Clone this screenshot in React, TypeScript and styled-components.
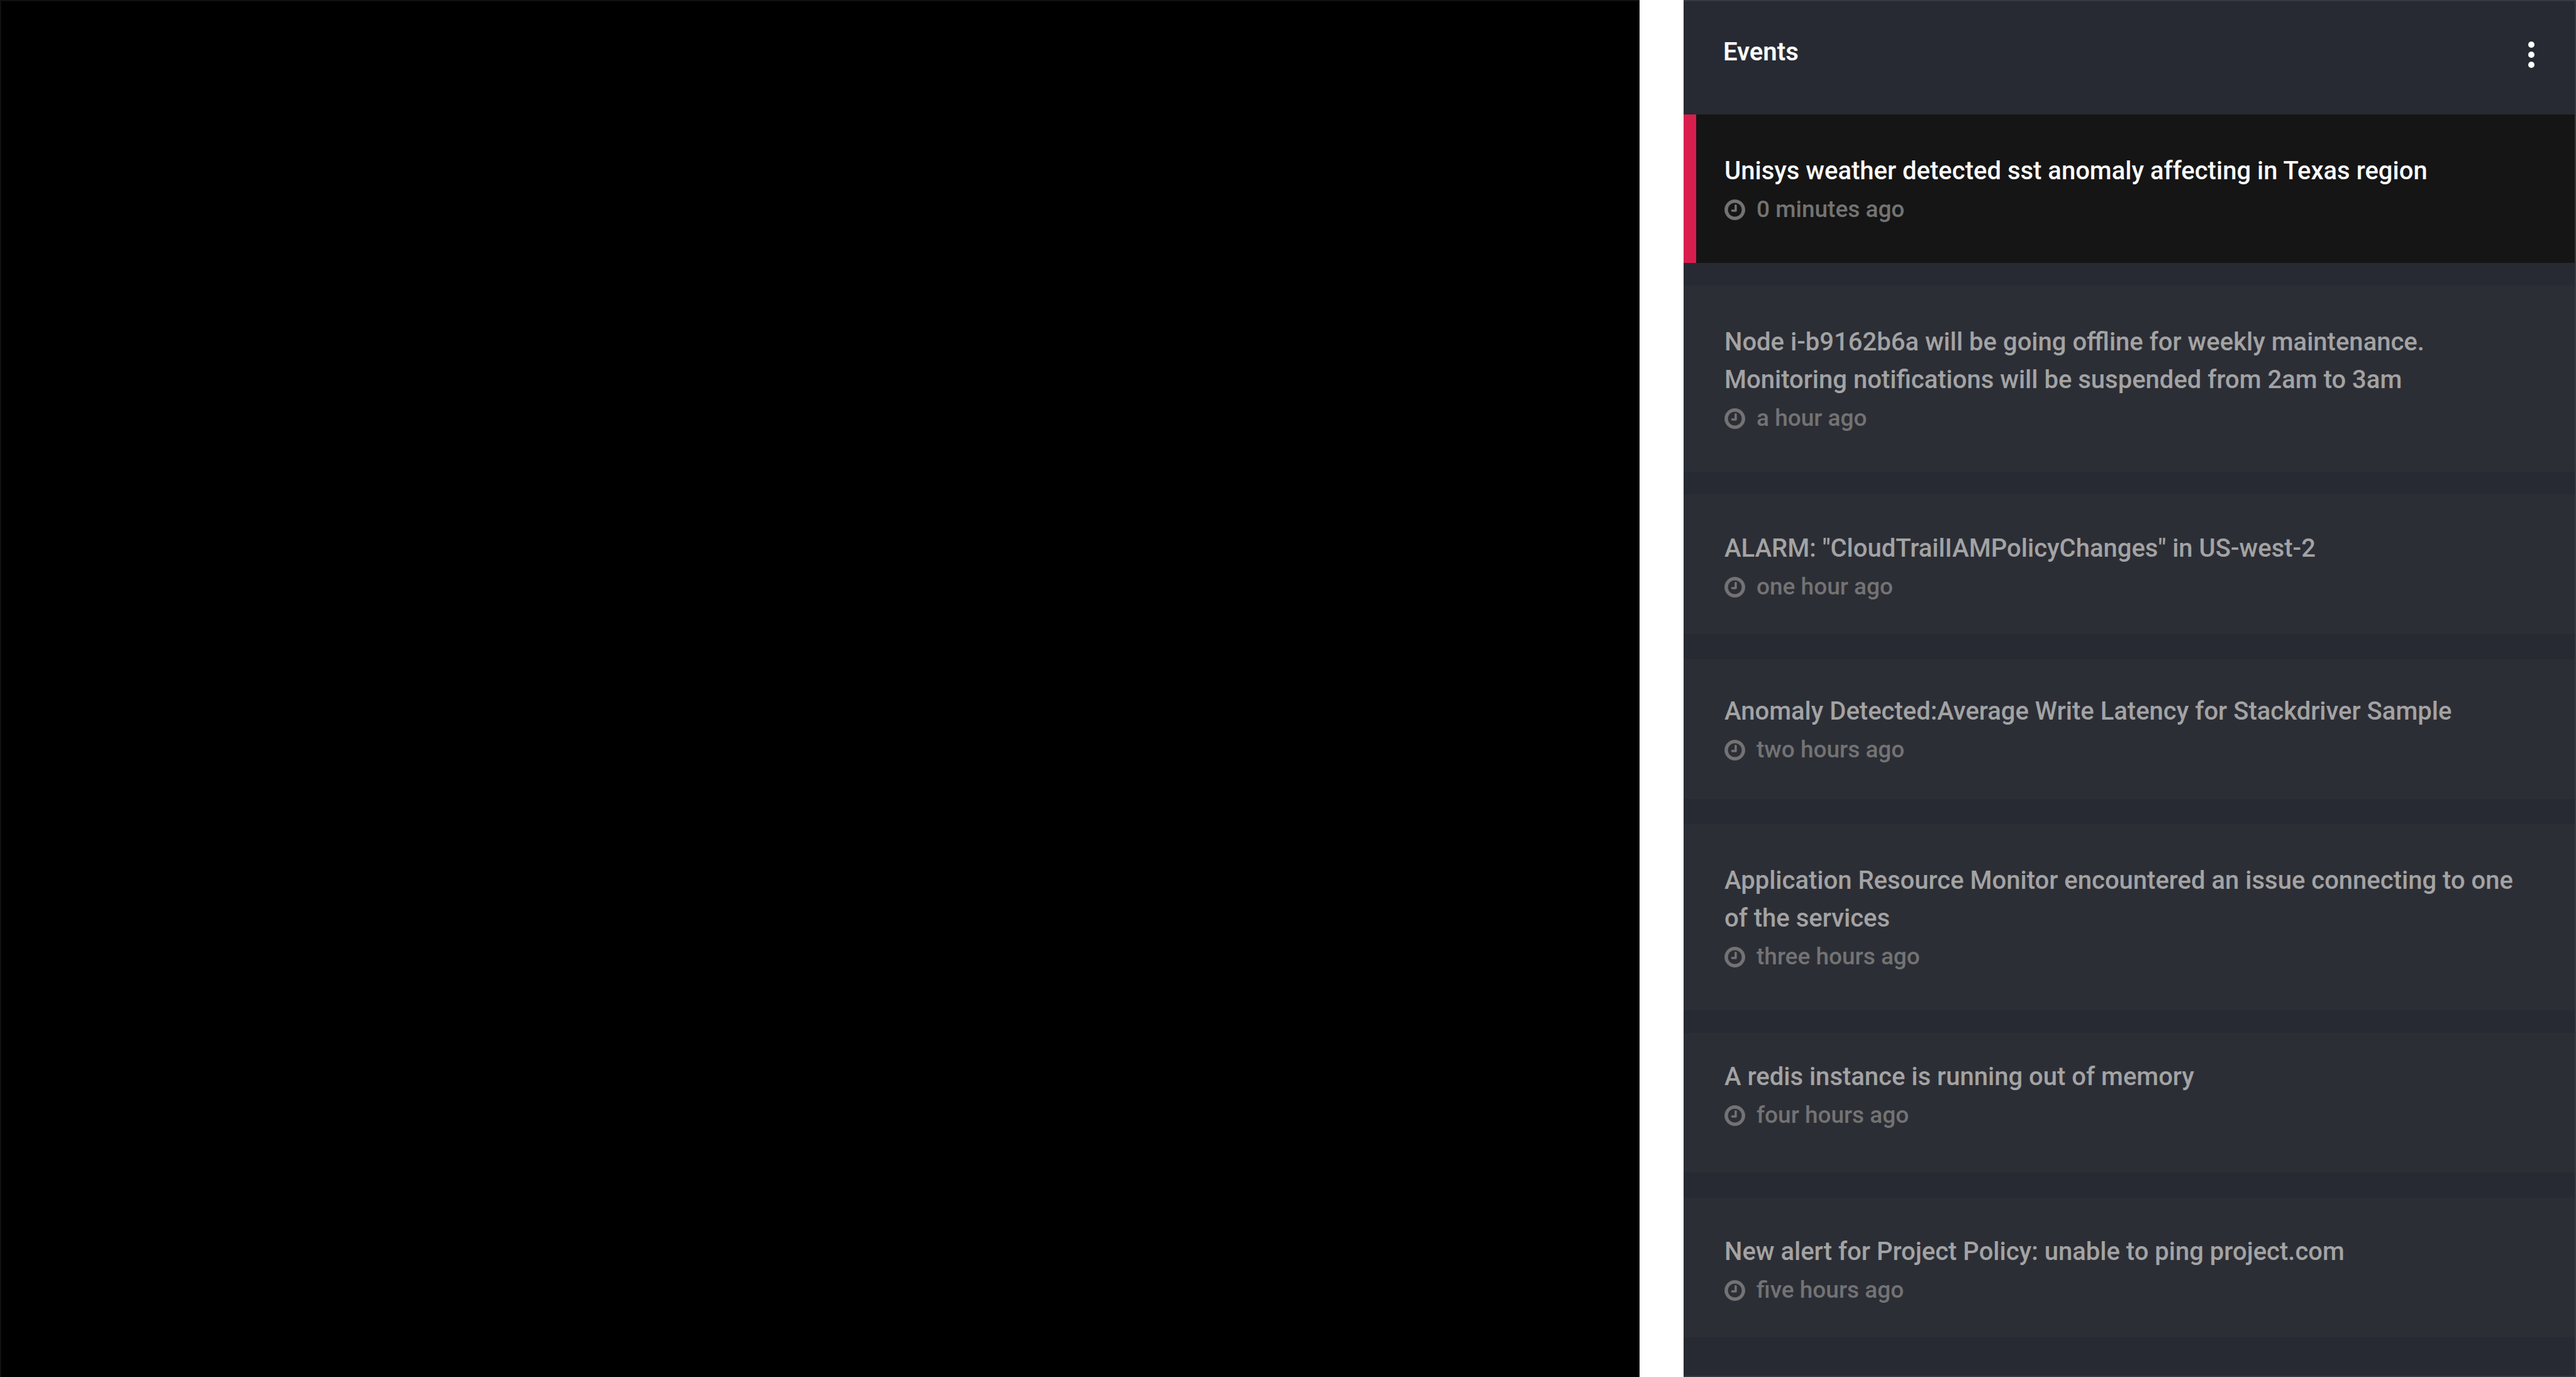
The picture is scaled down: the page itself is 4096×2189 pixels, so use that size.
import React from "react";
import styled, { createGlobalStyle } from "styled-components";

const GlobalStyle = createGlobalStyle`
  *, *::before, *::after { box-sizing: border-box; }
  body { margin: 0; background: #ffffff; font-family: Roboto, "Liberation Sans", sans-serif; }
`;

const Page = styled.div`
  display: grid;
  grid-template-columns: 2607fr 1419fr;
  column-gap: 70px;
  min-height: 100vh;
`;

const Stage = styled.main`
  background: #000000;
  border-top: 2px solid #111111;
  border-left: 2px solid #111111;
`;

const Panel = styled.aside`
  display: flex;
  flex-direction: column;
  background: #272a32;
  border: 0 solid #363942;
  border-width: 2px 2px 2px 0;
`;

const Header = styled.header`
  display: flex;
  align-items: flex-start;
  justify-content: space-between;
  height: 180px;
  padding: 51px 60px 0 63px;
`;

const Heading = styled.h1`
  margin: 0;
  color: #fafafa;
  font-size: 40px;
  font-weight: 600;
  line-height: 60px;
`;

const MenuButton = styled.button`
  display: flex;
  flex-direction: column;
  align-items: center;
  gap: 6px;
  margin: 0;
  padding: 13px 4px;
  border: 0;
  background: none;
  cursor: pointer;
`;

const Dot = styled.span`
  width: 10px;
  height: 10px;
  border-radius: 50%;
  background: #ffffff;
`;

const List = styled.ul`
  margin: 0;
  padding: 0;
  list-style: none;
`;

type Spacing = "roomy" | "low" | "compact" | "raised";

const paddings: Record<Spacing, string> = {
  roomy: "60px 64px 54px 45px",
  low: "56px 64px 44px 45px",
  compact: "53px 64px 47px 45px",
  raised: "40px 64px 60px 45px",
};

const Item = styled.li<{ $spacing: Spacing; $active: boolean }>`
  margin-bottom: ${(p) => (p.$spacing === "roomy" ? 36 : 40)}px;
  padding: ${(p) => paddings[p.$spacing]};
  border-left: 20px solid ${(p) => (p.$active ? "#d91e4e" : "#2c2e36")};
  background: ${(p) => (p.$active ? "#151515" : "#2c2e36")};
  color: ${(p) => (p.$active ? "#fafafa" : "#a3a3a3")};
`;

const Title = styled.p`
  margin: 0;
  font-size: 40px;
  font-weight: 500;
  line-height: 60px;
  white-space: pre-line;
`;

const Meta = styled.div`
  display: flex;
  align-items: center;
  gap: 18px;
  color: #737373;
  font-size: 37px;
  font-weight: 500;
  line-height: 62px;
`;

const ClockSvg = styled.svg`
  width: 33px;
  height: 33px;
  fill: currentColor;
  stroke: currentColor;
  stroke-width: 40px;
`;

const Clock = () => (
  <ClockSvg viewBox="-20 108 1576 1576" aria-hidden="true">
    <path d="M896 544v448q0 14-9 23t-23 9h-320q-14 0-23-9t-9-23v-64q0-14 9-23t23-9h224v-352q0-14 9-23t23-9h64q14 0 23 9t9 23zm416 352q0-148-73-273t-198-198-273-73-273 73-198 198-73 273 73 273 198 198 273 73 273-73 198-198 73-273zm224 0q0 209-103 385.5t-279.5 279.5-385.5 103-385.5-103-279.5-279.5-103-385.5 103-385.5 279.5-279.5 385.5-103 385.5 103 279.5 279.5 103 385.5z" />
  </ClockSvg>
);

interface EventEntry {
  title: string;
  time: string;
  spacing: Spacing;
}

const events: EventEntry[] = [
  { title: "Unisys weather detected sst anomaly affecting in Texas region", time: "0 minutes ago", spacing: "roomy" },
  {
    title:
      "Node i-b9162b6a will be going offline for weekly maintenance.\nMonitoring notifications will be suspended from 2am to 3am",
    time: "a hour ago",
    spacing: "roomy",
  },
  { title: 'ALARM: "CloudTrailIAMPolicyChanges" in US-west-2', time: "one hour ago", spacing: "low" },
  { title: "Anomaly Detected:Average Write Latency for Stackdriver Sample", time: "two hours ago", spacing: "compact" },
  {
    title: "Application Resource Monitor encountered an issue connecting to one\nof the services",
    time: "three hours ago",
    spacing: "roomy",
  },
  { title: "A redis instance is running out of memory", time: "four hours ago", spacing: "raised" },
  { title: "New alert for Project Policy: unable to ping project.com", time: "five hours ago", spacing: "low" },
];

export default function App() {
  return (
    <>
      <GlobalStyle />
      <Page>
        <Stage />
        <Panel>
          <Header>
            <Heading>Events</Heading>
            <MenuButton type="button" aria-label="Event options">
              <Dot />
              <Dot />
              <Dot />
            </MenuButton>
          </Header>
          <List>
            {events.map((event, index) => (
              <Item key={event.title} $spacing={event.spacing} $active={index === 0}>
                <Title>{event.title}</Title>
                <Meta>
                  <Clock />
                  <span>{event.time}</span>
                </Meta>
              </Item>
            ))}
          </List>
        </Panel>
      </Page>
    </>
  );
}
